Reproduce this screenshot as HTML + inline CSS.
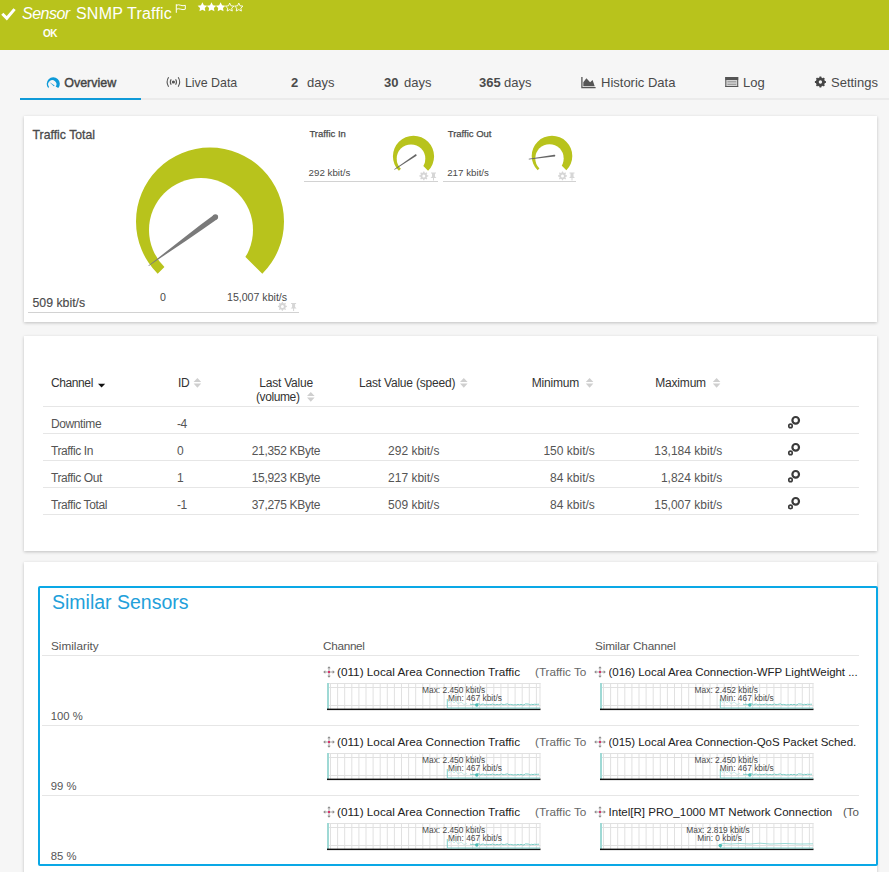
<!DOCTYPE html>
<html><head><meta charset="utf-8">
<style>
html,body{margin:0;padding:0}
body{width:889px;height:872px;overflow:hidden;position:relative;background:#f6f6f6;font-family:"Liberation Sans",sans-serif;color:#4a4a4a}
.t{position:absolute;white-space:nowrap;line-height:1}
.abs{position:absolute}
#hdr{position:absolute;left:0;top:0;width:889px;height:50px;background:#b8c31c}
.card{position:absolute;background:#fff;box-shadow:0 1px 3px rgba(0,0,0,.22)}
.hl{position:absolute;height:1px;background:#e6e6e6}
</style></head><body>
<div id="hdr"></div>
<!-- header -->
<svg class="abs" style="left:0;top:0" width="260" height="50">
  <path d="M2.3 13.7 L6.8 18.3 L14.6 9.1" fill="none" stroke="#fff" stroke-width="3"/>
  <path d="M176.3 4.2V12.8M176.3 5.3Q178.5 4.3 180.8 5.3Q183 6.2 185.3 5.3V9.2Q183 10.1 180.8 9.2Q178.5 8.3 176.3 9.2" fill="none" stroke="#fff" stroke-width="1"/>
  <g fill="#fff"><path d="M202.40 2.30L203.87 5.28L207.16 5.75L204.78 8.07L205.34 11.35L202.40 9.80L199.46 11.35L200.02 8.07L197.64 5.75L200.93 5.28Z"/><path d="M211.50 2.30L212.97 5.28L216.26 5.75L213.88 8.07L214.44 11.35L211.50 9.80L208.56 11.35L209.12 8.07L206.74 5.75L210.03 5.28Z"/><path d="M220.60 2.30L222.07 5.28L225.36 5.75L222.98 8.07L223.54 11.35L220.60 9.80L217.66 11.35L218.22 8.07L215.84 5.75L219.13 5.28Z"/></g><g fill="none" stroke="#fff" stroke-width="0.9"><path d="M229.70 3.10L230.93 5.80L233.88 6.14L231.70 8.15L232.29 11.06L229.70 9.60L227.11 11.06L227.70 8.15L225.52 6.14L228.47 5.80Z"/><path d="M238.80 3.10L240.03 5.80L242.98 6.14L240.80 8.15L241.39 11.06L238.80 9.60L236.21 11.06L236.80 8.15L234.62 6.14L237.57 5.80Z"/></g>
</svg>
<svg class="abs" style="left:0;top:70px" width="889" height="25">
  <path d="M48.38 18.28A6.55 6.55 0 1 1 58.27 18.11L55.66 16.55A4.1 4.1 0 1 0 48.94 16.55Z" fill="#0e9ad8"/>
  <path d="M49.3 12.1L54.6 15.6L53.9 16.3Z" fill="#0e9ad8"/>
  <g fill="none" stroke="#555" stroke-width="1.1">
    <path d="M168.6 7.3Q165.6 12 168.6 16.7M171.2 9.3Q169.4 12 171.2 14.7M178.2 7.3Q181.2 12 178.2 16.7M175.6 9.3Q177.4 12 175.6 14.7"/>
  </g>
  <circle cx="173.4" cy="12" r="1.6" fill="#555"/>
  <path d="M581.9 7V17.6H595.6" fill="none" stroke="#555" stroke-width="1.3"/>
  <path d="M583.3 16.2V12.2L586.4 8.3L590.1 12.3L592.6 10L594.7 16.2Z" fill="#555"/>
  <rect x="725.3" y="7" width="12.9" height="10" fill="#d4d4d4"/>
  <rect x="725.3" y="7" width="12.9" height="3" fill="#555"/>
  <path d="M725.8 7V17M737.7 7V17M725.3 16.5H738.2" stroke="#555" stroke-width="1"/>
  <path d="M727.5 11.8H736.2M727.5 14.3H736.2" stroke="#8a8a8a" stroke-width="0.9"/>
  <g transform="translate(820.4 12)" fill="#454545"><path d="M4.49 -0.99L5.5 -0.9L5.5 0.9L4.49 0.99L3.87 2.48L4.45 3.3L3.3 4.45L2.48 3.87L0.99 4.49L0.9 5.5L-0.9 5.5L-0.99 4.49L-2.48 3.87L-3.3 4.45L-4.45 3.3L-3.87 2.48L-4.49 0.99L-5.5 0.9L-5.5 -0.9L-4.49 -0.99L-3.87 -2.48L-4.45 -3.3L-3.3 -4.45L-2.48 -3.87L-0.99 -4.49L-0.9 -5.5L0.9 -5.5L0.99 -4.49L2.48 -3.87L3.3 -4.45L4.45 -3.3L3.87 -2.48Z M1.7 0A1.7 1.7 0 1 0 -1.7 0A1.7 1.7 0 1 0 1.7 0Z" fill-rule="evenodd"/></g>
</svg>
<div class="t" style="left:22px;top:6px;font-size:16px;letter-spacing:-0.5px;color:#fff;font-style:italic">Sensor</div>
<div class="t" style="left:76px;top:6px;font-size:16px;letter-spacing:0.2px;color:#fff">SNMP Traffic</div>
<div class="t" style="left:43px;top:29px;font-size:10px;letter-spacing:-0.6px;color:#fff;font-weight:bold">OK</div>

<!-- tabs -->
<div class="abs" style="left:20px;top:98px;width:869px;height:2px;background:#ebebeb"></div>
<div class="abs" style="left:20px;top:98px;width:121px;height:2px;background:#0f9ad8"></div>
<div class="t" style="left:64.2px;top:77px;font-size:12.5px;color:#444;-webkit-text-stroke:0.4px #444">Overview</div>
<div class="t" style="left:184.9px;top:77px;font-size:12.4px">Live Data</div>
<div class="t" style="left:291px;top:76px;font-size:13px;font-weight:bold">2</div>
<div class="t" style="left:307px;top:76px;font-size:13px">days</div>
<div class="t" style="left:384px;top:76px;font-size:13px;font-weight:bold">30</div>
<div class="t" style="left:404px;top:76px;font-size:13px">days</div>
<div class="t" style="left:479px;top:76px;font-size:13px;font-weight:bold">365</div>
<div class="t" style="left:504px;top:76px;font-size:13px">days</div>
<div class="t" style="left:601px;top:76px;font-size:13px">Historic Data</div>
<div class="t" style="left:743px;top:76px;font-size:13px">Log</div>
<div class="t" style="left:831px;top:76px;font-size:13px">Settings</div>

<!-- card 1 -->
<div class="card" style="left:24px;top:116px;width:853px;height:206px"></div>
<svg width="0" height="0" style="position:absolute"><defs>
<path id="gear" d="M3.32 -0.73L4.46 -0.58L4.46 0.58L3.32 0.73L2.86 1.83L3.57 2.74L2.74 3.57L1.83 2.86L0.73 3.32L0.58 4.46L-0.58 4.46L-0.73 3.32L-1.83 2.86L-2.74 3.57L-3.57 2.74L-2.86 1.83L-3.32 0.73L-4.46 0.58L-4.46 -0.58L-3.32 -0.73L-2.86 -1.83L-3.57 -2.74L-2.74 -3.57L-1.83 -2.86L-0.73 -3.32L-0.58 -4.46L0.58 -4.46L0.73 -3.32L1.83 -2.86L2.74 -3.57L3.57 -2.74L2.86 -1.83Z M1.5 0 A1.5 1.5 0 1 0 -1.5 0 A1.5 1.5 0 1 0 1.5 0Z" fill-rule="evenodd"/>
<path id="pin" d="M-2.5 -3.5H2.5V-2.5H1.5V0.5L3 2H0.5V4.5H-0.5V2H-3L-1.5 0.5V-2.5H-2.5Z"/>
</defs></svg>
<svg class="abs" style="left:0;top:0" width="889" height="330">
<path d="M210.00 221.50L157.67 273.83A74 74 0 1 1 262.33 273.83Z" fill="#b8c31c"/><circle cx="201" cy="230" r="52" fill="#fff"/><path d="M213.78 214.88L200.60 224.84L184.22 237.43L167.96 250.19L154.99 260.44L148.42 265.46L148.78 265.94L155.57 261.24L169.32 252.05L186.46 240.51L203.48 228.80L217.02 219.32Z" fill="#7a7a7a"/><circle cx="215.4" cy="217.1" r="2.75" fill="#7a7a7a"/>
<path d="M413.50 156.30L398.93 170.87A20.6 20.6 0 1 1 428.07 170.87Z" fill="#b8c31c"/><circle cx="411" cy="158.7" r="14.3" fill="#fff"/><path d="M415.20 154.45L394.20 169.21L394.60 169.79L416.20 155.95Z" fill="#666"/><circle cx="415.7" cy="155.2" r="0.9" fill="#666"/>
<path d="M552.00 156.00L537.65 170.35A20.3 20.3 0 1 1 566.35 170.35Z" fill="#b8c31c"/><circle cx="549.5" cy="158.4" r="14.2" fill="#fff"/><path d="M554.27 154.71L528.75 158.85L528.85 159.55L554.53 156.49Z" fill="#666"/><circle cx="554.4" cy="155.6" r="0.9" fill="#666"/>
<rect x="28" y="312" width="271" height="1" fill="#d2d2d2"/>
<rect x="304" y="181" width="134" height="1" fill="#d2d2d2"/>
<rect x="443" y="181" width="133" height="1" fill="#d2d2d2"/>
<g fill="#d6d6d6">
<use href="#gear" transform="translate(282.4 306.4)"/><use href="#pin" transform="translate(293.6 306.4)"/>
<use href="#gear" transform="translate(423.8 175.9)"/><use href="#pin" transform="translate(433.5 175.9)"/>
<use href="#gear" transform="translate(562.5 175.9)"/><use href="#pin" transform="translate(572 175.9)"/>
</g>
</svg>
<div class="t" style="left:32.6px;top:128.5px;font-size:12.25px;-webkit-text-stroke:0.3px #4a4a4a">Traffic Total</div>
<div class="t" style="left:32.5px;top:297px;font-size:12.3px;-webkit-text-stroke:0.15px #4a4a4a">509 kbit/s</div>
<div class="t" style="left:160px;top:292.1px;font-size:10.6px">0</div>
<div class="t" style="left:227px;top:292.1px;font-size:10.6px">15,007 kbit/s</div>
<div class="t" style="left:309.4px;top:128.9px;font-size:9.5px;-webkit-text-stroke:0.25px #4a4a4a">Traffic In</div>
<div class="t" style="left:308.6px;top:167.6px;font-size:9.75px">292 kbit/s</div>
<div class="t" style="left:447.7px;top:128.9px;font-size:9.5px;-webkit-text-stroke:0.25px #4a4a4a">Traffic Out</div>
<div class="t" style="left:447.2px;top:167.6px;font-size:9.75px">217 kbit/s</div>
<!-- card 2 -->
<div class="card" style="left:24px;top:336px;width:853px;height:215px"></div>
<svg class="abs" style="left:0;top:330px" width="889" height="200">
<g fill="#e6e6e6">
<rect x="43" y="76" width="816" height="1"/><rect x="43" y="103" width="816" height="1"/><rect x="43" y="130" width="816" height="1"/><rect x="43" y="157" width="816" height="1"/><rect x="43" y="184" width="816" height="1"/>
</g>
<path d="M98 53.8H105.2L101.6 57.6Z" fill="#111"/>
<g fill="#cfcfcf" id="sortg">
<path d="M193.6 51.9H201.2L197.4 47.9Z M193.6 53.5H201.2L197.4 57.8Z"/>
<path d="M307 65.9H314.6L310.8 61.9Z M307 67.5H314.6L310.8 71.8Z"/>
<path d="M460 51.9H467.6L463.8 47.9Z M460 53.5H467.6L463.8 57.8Z"/>
<path d="M585.8 51.9H593.4L589.6 47.9Z M585.8 53.5H593.4L589.6 57.8Z"/>
<path d="M712.8 51.9H720.4L716.6 47.9Z M712.8 53.5H720.4L716.6 57.8Z"/>
</g>
<g fill="none" stroke="#3a3a3a">
<g transform="translate(0 0)"><circle cx="795.7" cy="90.3" r="3.3" stroke-width="2.2"/><circle cx="790.5" cy="95.9" r="1.75" stroke-width="1.6"/></g>
<g transform="translate(0 27)"><circle cx="795.7" cy="90.3" r="3.3" stroke-width="2.2"/><circle cx="790.5" cy="95.9" r="1.75" stroke-width="1.6"/></g>
<g transform="translate(0 54)"><circle cx="795.7" cy="90.3" r="3.3" stroke-width="2.2"/><circle cx="790.5" cy="95.9" r="1.75" stroke-width="1.6"/></g>
<g transform="translate(0 81)"><circle cx="795.7" cy="90.3" r="3.3" stroke-width="2.2"/><circle cx="790.5" cy="95.9" r="1.75" stroke-width="1.6"/></g>
</g>
</svg>
<div style="color:#333;font-size:12px;letter-spacing:-0.4px">
<div class="t" style="left:51px;top:376.8px">Channel</div>
<div class="t" style="left:178px;top:376.8px">ID</div>
<div class="t" style="left:259.2px;top:376.8px;letter-spacing:-0.2px">Last Value</div>
<div class="t" style="left:256px;top:390.8px">(volume)</div>
<div class="t" style="left:359px;top:376.8px;letter-spacing:-0.2px">Last Value (speed)</div>
<div class="t" style="left:531.8px;top:376.8px;letter-spacing:-0.2px">Minimum</div>
<div class="t" style="left:655.3px;top:376.8px;letter-spacing:-0.2px">Maximum</div>
</div>
<div style="color:#555;font-size:12px;letter-spacing:-0.4px">
<div class="t" style="left:51px;top:417.8px">Downtime</div>
<div class="t" style="left:177px;top:417.8px">-4</div>
<div class="t" style="left:51px;top:444.8px">Traffic In</div>
<div class="t" style="left:177px;top:444.8px">0</div>
<div class="t" style="left:51px;top:471.8px">Traffic Out</div>
<div class="t" style="left:177px;top:471.8px">1</div>
<div class="t" style="left:51px;top:498.8px">Traffic Total</div>
<div class="t" style="left:177px;top:498.8px">-1</div>
<div class="t" style="right:568.9px;letter-spacing:-0.3px;top:444.8px">21,352 KByte</div>
<div class="t" style="right:568.9px;letter-spacing:-0.3px;top:471.8px">15,923 KByte</div>
<div class="t" style="right:568.9px;letter-spacing:-0.3px;top:498.8px">37,275 KByte</div>
<div class="t" style="right:449.6px;letter-spacing:0;top:444.8px">292 kbit/s</div>
<div class="t" style="right:449.6px;letter-spacing:0;top:471.8px">217 kbit/s</div>
<div class="t" style="right:449.6px;letter-spacing:0;top:498.8px">509 kbit/s</div>
<div class="t" style="right:294.2px;letter-spacing:0;top:444.8px">150 kbit/s</div>
<div class="t" style="right:294.2px;letter-spacing:0;top:471.8px">84 kbit/s</div>
<div class="t" style="right:294.2px;letter-spacing:0;top:498.8px">84 kbit/s</div>
<div class="t" style="right:166.7px;letter-spacing:0;top:444.8px">13,184 kbit/s</div>
<div class="t" style="right:166.7px;letter-spacing:0;top:471.8px">1,824 kbit/s</div>
<div class="t" style="right:166.7px;letter-spacing:0;top:498.8px">15,007 kbit/s</div>
</div>
<!-- card 3 -->
<div class="card" style="left:24px;top:562px;width:853px;height:320px"></div>
<div class="abs" style="left:38px;top:586px;width:836px;height:276px;border:2px solid #0aa8e6;border-radius:2px"></div>
<!-- card3 content -->
<svg width="0" height="0" style="position:absolute"><defs>
<g id="spk"><rect x="0" y="0" width="213.5" height="26" fill="#fff"/><path d="M0 0.5H213.5M0 4.5H213.5M0 22.5H213.5M3.5 0V26M10.6 0V26M17.7 0V26M24.8 0V26M31.9 0V26M39.0 0V26M46.1 0V26M53.2 0V26M60.3 0V26M67.4 0V26M74.5 0V26M81.6 0V26M88.7 0V26M95.8 0V26M102.9 0V26M110.0 0V26M117.1 0V26M124.2 0V26M131.3 0V26M138.4 0V26M145.5 0V26M152.6 0V26M159.7 0V26M166.8 0V26M173.9 0V26M181.0 0V26M188.1 0V26M195.2 0V26M202.3 0V26M209.4 0V26M213 0V26" stroke="#e1e1e1" stroke-width="1" fill="none"/><rect x="0" y="0" width="2" height="26" fill="#9fd9d5"/><rect x="0" y="25.6" width="213.5" height="1.5" fill="#111"/></g>
<g id="dA"><path d="M120.3 16V25H213" stroke="#7fcfca" stroke-width="1" fill="none"/><path d="M121 18L123 19.5L125 17.5L127 20L129 18L131 21L134 19L137 21.5L140 20.5" stroke="#bfe6e3" stroke-width="0.8" fill="none"/><path d="M143.0 21.1L144.5 21.5L146.0 21.2L147.5 21.5L149.0 21.6L150.5 20.9L152.0 20.8L153.5 21.8L155.0 21.1L156.5 21.1L158.0 22.0L159.5 21.4L161.0 21.8L162.5 21.4L164.0 21.6L165.5 21.0L167.0 21.6L168.5 21.8L170.0 21.4L171.5 21.7L173.0 21.6L174.5 20.9L176.0 21.7L177.5 21.5L179.0 21.2L180.5 20.8L182.0 21.8L183.5 21.4L185.0 21.7L186.5 21.9L188.0 21.7L189.5 21.9L191.0 21.3L192.5 21.8L194.0 21.3L195.5 21.9L197.0 21.9L198.5 20.9L200.0 21.0L201.5 21.1L203.0 22.0L204.5 21.3L206.0 21.6L207.5 21.2L209.0 21.4L210.5 21.3L212.0 21.2" stroke="#6cc7c1" stroke-width="0.9" fill="none"/><circle cx="149.8" cy="22" r="1.7" fill="#4dbdb6"/></g>
<g id="dB"><path d="M120.3 21V25H213" stroke="#7fcfca" stroke-width="1" fill="none"/><path d="M121 21L124 20.5L130 21L140 20.5L150 21L160 20.2L170 21L185 20.5L200 21L213 20.8" stroke="#8fd5d0" stroke-width="0.9" fill="none"/><circle cx="120.3" cy="22.5" r="1.8" fill="#4dbdb6"/></g>
<g id="mv" fill="#8c8c8c"><rect x="5.1" y="1" width="0.8" height="9"/><rect x="1" y="5.1" width="9" height="0.8"/><path d="M5.5 -0.3L3.8 1.8H7.2Z M5.5 11.3L3.8 9.2H7.2Z M-0.3 5.5L1.8 3.8V7.2Z M11.3 5.5L9.2 3.8V7.2Z"/><rect x="4.5" y="4.5" width="2" height="2" fill="#d9306a"/></g>
</defs></svg>
<div class="t" style="left:52px;top:593.3px;font-size:19.5px;color:#22a0da">Similar Sensors</div>
<svg class="abs" style="left:0;top:650px" width="889" height="150"><g fill="#e6e6e6"><rect x="42" y="5" width="817" height="1"/><rect x="42" y="75" width="817" height="1"/><rect x="42" y="145" width="817" height="1"/></g></svg>
<div style="color:#555;font-size:11.75px">
<div class="t" style="left:51px;top:639.7px">Similarity</div>
<div class="t" style="left:323px;top:639.7px;letter-spacing:-0.3px">Channel</div>
<div class="t" style="left:595px;top:639.7px;letter-spacing:-0.15px">Similar Channel</div>
<div class="t" style="left:50.8px;top:711px;font-size:11.3px">100 %</div>
<div class="t" style="left:50.8px;top:781px;font-size:11.3px">99 %</div>
<div class="t" style="left:50.8px;top:851px;font-size:11.3px">85 %</div>
</div>
<svg class="abs" style="left:323px;top:666px" width="12" height="12"><use href="#mv" transform="translate(0.5 0.5)"/></svg>
<div class="t" style="left:337px;top:666px;width:251px;overflow:hidden;font-size:11.75px;color:#222">(011) Local Area Connection Traffic&nbsp;&nbsp;&nbsp;&nbsp;<span style="color:#666;margin-left:1.8px">(Traffic To</span></div>
<svg class="abs" style="left:327px;top:683px" width="214" height="28"><use href="#spk"/><use href="#dA"/><text x="95" y="9.6" font-size="8.4" fill="#4a4a4a" font-family="Liberation Sans">Max: 2.450 kbit/s</text><text x="121" y="17.9" font-size="8.4" fill="#4a4a4a" font-family="Liberation Sans">Min: 467 kbit/s</text></svg>
<svg class="abs" style="left:594px;top:666px" width="12" height="12"><use href="#mv" transform="translate(0.5 0.5)"/></svg>
<div class="t" style="left:608.5px;top:666.6px;width:251px;overflow:hidden;font-size:11.5px;letter-spacing:-0.05px;color:#222">(016) Local Area Connection-WFP LightWeight ...</div>
<svg class="abs" style="left:599.5px;top:683px" width="214" height="28"><use href="#spk"/><use href="#dA"/><text x="94.6" y="9.6" font-size="8.4" fill="#4a4a4a" font-family="Liberation Sans">Max: 2.452 kbit/s</text><text x="119.7" y="17.9" font-size="8.4" fill="#4a4a4a" font-family="Liberation Sans">Min: 467 kbit/s</text></svg>
<svg class="abs" style="left:323px;top:736px" width="12" height="12"><use href="#mv" transform="translate(0.5 0.5)"/></svg>
<div class="t" style="left:337px;top:736px;width:251px;overflow:hidden;font-size:11.75px;color:#222">(011) Local Area Connection Traffic&nbsp;&nbsp;&nbsp;&nbsp;<span style="color:#666;margin-left:1.8px">(Traffic To</span></div>
<svg class="abs" style="left:327px;top:753px" width="214" height="28"><use href="#spk"/><use href="#dA"/><text x="95" y="9.6" font-size="8.4" fill="#4a4a4a" font-family="Liberation Sans">Max: 2.450 kbit/s</text><text x="121" y="17.9" font-size="8.4" fill="#4a4a4a" font-family="Liberation Sans">Min: 467 kbit/s</text></svg>
<svg class="abs" style="left:594px;top:736px" width="12" height="12"><use href="#mv" transform="translate(0.5 0.5)"/></svg>
<div class="t" style="left:608.5px;top:736.6px;width:251px;overflow:hidden;font-size:11.5px;letter-spacing:-0.05px;color:#222">(015) Local Area Connection-QoS Packet Sched.</div>
<svg class="abs" style="left:599.5px;top:753px" width="214" height="28"><use href="#spk"/><use href="#dA"/><text x="94.6" y="9.6" font-size="8.4" fill="#4a4a4a" font-family="Liberation Sans">Max: 2.450 kbit/s</text><text x="119.7" y="17.9" font-size="8.4" fill="#4a4a4a" font-family="Liberation Sans">Min: 467 kbit/s</text></svg>
<svg class="abs" style="left:323px;top:806px" width="12" height="12"><use href="#mv" transform="translate(0.5 0.5)"/></svg>
<div class="t" style="left:337px;top:806px;width:251px;overflow:hidden;font-size:11.75px;color:#222">(011) Local Area Connection Traffic&nbsp;&nbsp;&nbsp;&nbsp;<span style="color:#666;margin-left:1.8px">(Traffic To</span></div>
<svg class="abs" style="left:327px;top:823px" width="214" height="28"><use href="#spk"/><use href="#dA"/><text x="95" y="9.6" font-size="8.4" fill="#4a4a4a" font-family="Liberation Sans">Max: 2.450 kbit/s</text><text x="121" y="17.9" font-size="8.4" fill="#4a4a4a" font-family="Liberation Sans">Min: 467 kbit/s</text></svg>
<svg class="abs" style="left:594px;top:806px" width="12" height="12"><use href="#mv" transform="translate(0.5 0.5)"/></svg>
<div class="t" style="left:608.5px;top:806.6px;width:251px;overflow:hidden;font-size:11.55px;color:#222">Intel[R] PRO_1000 MT Network Connection&nbsp;&nbsp;&nbsp;<span style="color:#555;margin-left:1px">(To</span></div>
<svg class="abs" style="left:599.5px;top:823px" width="214" height="28"><use href="#spk"/><use href="#dB"/><text x="86.3" y="9.6" font-size="8.4" fill="#4a4a4a" font-family="Liberation Sans">Max: 2.819 kbit/s</text><text x="97.2" y="17.9" font-size="8.4" fill="#4a4a4a" font-family="Liberation Sans">Min: 0 kbit/s</text></svg>

</body></html>
